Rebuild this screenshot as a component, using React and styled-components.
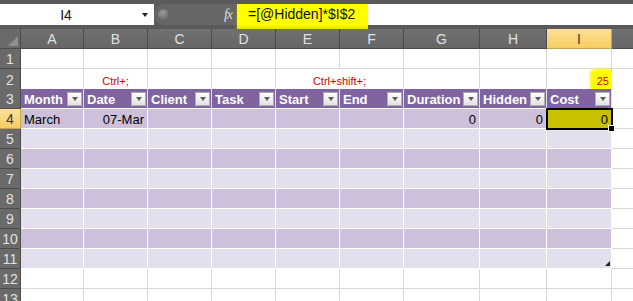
import React from 'react';
import styled, { createGlobalStyle, css } from 'styled-components';

const GlobalStyle = createGlobalStyle`
  html, body {
    margin: 0;
    padding: 0;
    background: #ffffff;
  }
  body {
    font-family: "Liberation Sans", Arial, sans-serif;
  }
`;

const COLUMNS = '21px 63px 64px 64px 64px 64px 64px 76px 67px 65px 64px';

const Window = styled.div`
  width: 633px;
  height: 301px;
  overflow: hidden;
  background: #5a5a5a;
  padding-top: 4px;
  box-sizing: border-box;
  display: flex;
  flex-direction: column;
`;

const FormulaBar = styled.div`
  display: flex;
  height: 25px;
  padding-bottom: 4px;
  box-sizing: border-box;
  flex-shrink: 0;
`;

const NameBox = styled.div`
  width: 154px;
  background: #ffffff;
  display: flex;
  align-items: center;
  font-size: 14px;
  color: #111;
`;

const NameText = styled.span`
  width: 132px;
  text-align: center;
`;

const DropArrow = styled.span`
  margin-left: auto;
  margin-right: 6px;
  width: 0;
  height: 0;
  border-left: 3.5px solid transparent;
  border-right: 3.5px solid transparent;
  border-top: 4px solid #222;
`;

const FxPill = styled.div`
  width: 83px;
  background: #666666;
  border-radius: 11px 0 0 11px;
  display: flex;
  align-items: center;
  padding: 0 5px 0 4px;
  box-sizing: border-box;
`;

const Grip = styled.span`
  width: 11px;
  height: 11px;
  border-radius: 50%;
  background: radial-gradient(circle at 40% 35%, #9a9a9a, #6e6e6e 70%);
  box-shadow: 0 0 1px #4a4a4a;
`;

const FxLabel = styled.span`
  margin-left: auto;
  font-family: "Liberation Serif", "Times New Roman", serif;
  font-style: italic;
  font-size: 14px;
  color: #dcdcdc;
  letter-spacing: -1px;
`;

const FormulaInput = styled.div`
  flex: 1;
  background: #ffffff;
  display: flex;
  align-items: flex-start;
`;

const Marker = styled.span`
  display: inline-flex;
  align-items: flex-start;
  width: 131px;
  height: 25px;
  padding: 2px 0 0 11px;
  box-sizing: border-box;
  background: linear-gradient(#ffff00 80%, #e6e600);
  box-shadow: -1px 2px 3px 0 rgba(150, 150, 0, 0.6);
  font-size: 14px;
  line-height: 17px;
  color: #111;
`;

const Sheet = styled.div`
  display: flex;
  flex-direction: column;
`;

const Row = styled.div`
  display: grid;
  grid-template-columns: ${COLUMNS};
  height: 20px;
`;

const kinds = {
  corner: css`
    background: #6a6a6a;
    border-right: 1px solid #4c4c4c;
    border-bottom: 1px solid #4c4c4c;
    justify-content: flex-end;
    align-items: flex-end;
    padding: 0 2px 2px 0;
  `,
  colhead: css`
    background: linear-gradient(#707070, #666666);
    color: #e2e2e2;
    justify-content: center;
    font-size: 14px;
    border-right: 1px solid #4c4c4c;
    border-bottom: 1px solid #4c4c4c;
  `,
  rowhead: css`
    background: #6a6a6a;
    color: #e2e2e2;
    justify-content: center;
    font-size: 14px;
    padding: 0;
    border-right: 1px solid #4c4c4c;
    border-bottom: 1px solid #4c4c4c;
  `,
  active: css`
    background: linear-gradient(#fbe197, #f6cd62);
    color: #3a3a3a;
    justify-content: center;
    font-size: 14px;
    padding: 0;
    border-right: 1px solid #c9a54a;
    border-bottom: 1px solid #c9a54a;
  `,
  plain: css`
    background: #ffffff;
    border-right: 1px solid #d8d8d8;
    border-bottom: 1px solid #d8d8d8;
  `,
  thead: css`
    background: #8064a2;
    color: #ffffff;
    font-weight: bold;
    padding-right: 1px;
    border-right: 1px solid #e6e0ee;
    border-bottom: 1px solid #ffffff;
  `,
  dark: css`
    background: #ccc0da;
    border-right: 1px solid #ffffff;
    border-bottom: 1px solid #ffffff;
  `,
  light: css`
    background: #e4dfec;
    border-right: 1px solid #ffffff;
    border-bottom: 1px solid #ffffff;
  `,
  current: css`
    background: #c9c100;
    border-right: 1px solid #ffffff;
    border-bottom: 1px solid #ffffff;
    outline: 2px solid #000000;
    outline-offset: -1px;
    z-index: 2;
  `,
};

const Cell = styled.div`
  position: relative;
  display: flex;
  align-items: center;
  padding: 1px 3px 0 3px;
  box-sizing: border-box;
  font-size: 13px;
  color: #000;
  white-space: nowrap;
  justify-content: ${(p) =>
    p.$align === 'right' ? 'flex-end' : p.$align === 'center' ? 'center' : 'flex-start'};
  grid-column: ${(p) => (p.$span ? `span ${p.$span}` : 'auto')};
  ${(p) => kinds[p.$kind]}
`;

const CornerMark = styled.span`
  width: 10px;
  height: 10px;
  background: #8e8e8e;
  clip-path: polygon(100% 0, 100% 100%, 0 100%);
`;

const FilterButton = styled.span`
  margin-left: auto;
  width: 15px;
  height: 14px;
  box-sizing: border-box;
  border: 1px solid #b0b0b0;
  background: linear-gradient(#ffffff, #e2e2e2);
  display: flex;
  align-items: center;
  justify-content: center;

  &::after {
    content: '';
    border-left: 3.5px solid transparent;
    border-right: 3.5px solid transparent;
    border-top: 4px solid #5a5a5a;
  }
`;

const Note = styled.span`
  color: #d40000;
  font-size: 11px;
`;

const NoteMarker = styled.span`
  display: inline-block;
  padding: 3px 4px 3px 6px;
  margin-right: -5px;
  background: #ffff00;
  border-radius: 5px;
  box-shadow: 0 0 3px 1px #f4f400;
`;

const FillHandle = styled.span`
  position: absolute;
  right: -4px;
  bottom: -4px;
  width: 5px;
  height: 5px;
  background: #000;
  border: 1px solid #fff;
`;

const ResizeMark = styled.span`
  position: absolute;
  right: 1px;
  bottom: 2px;
  width: 5px;
  height: 5px;
  background: #222;
  clip-path: polygon(100% 0, 100% 100%, 0 100%);
`;

// J sits mostly past the window edge, so its letter is out of view
const letters = ['A', 'B', 'C', 'D', 'E', 'F', 'G', 'H', 'I', ''];
const headers = ['Month', 'Date', 'Client', 'Task', 'Start', 'End', 'Duration', 'Hidden', 'Cost'];

function RowHead({ n, active }) {
  return <Cell $kind={active ? 'active' : 'rowhead'}>{n}</Cell>;
}

function BlankRow({ n }) {
  return (
    <Row>
      <RowHead n={n} />
      {letters.map((l, i) => (
        <Cell key={i} $kind="plain" />
      ))}
    </Row>
  );
}

function BandRow({ n, tone, last }) {
  return (
    <Row>
      <RowHead n={n} />
      {headers.map((h, i) => (
        <Cell key={h} $kind={tone}>
          {last && i === headers.length - 1 && <ResizeMark />}
        </Cell>
      ))}
      <Cell $kind="plain" />
    </Row>
  );
}

export default function App() {
  return (
    <>
      <GlobalStyle />
      <Window>
        <FormulaBar>
          <NameBox>
            <NameText>I4</NameText>
            <DropArrow />
          </NameBox>
          <FxPill>
            <Grip />
            <FxLabel>fx</FxLabel>
          </FxPill>
          <FormulaInput>
            <Marker>=[@Hidden]*$I$2</Marker>
          </FormulaInput>
        </FormulaBar>

        <Sheet>
          <Row>
            <Cell $kind="corner">
              <CornerMark />
            </Cell>
            {letters.map((l, i) => (
              <Cell key={i} $kind={l === 'I' ? 'active' : 'colhead'}>
                {l}
              </Cell>
            ))}
          </Row>

          <BlankRow n={1} />

          <Row>
            <RowHead n={2} />
            <Cell $kind="plain" />
            <Cell $kind="plain" $align="center">
              <Note>Ctrl+;</Note>
            </Cell>
            <Cell $kind="plain" />
            <Cell $kind="plain" />
            <Cell $kind="plain" $span={2} $align="center">
              <Note>Ctrl+shift+;</Note>
            </Cell>
            <Cell $kind="plain" />
            <Cell $kind="plain" />
            <Cell $kind="plain" $align="right">
              <NoteMarker>
                <Note>25</Note>
              </NoteMarker>
            </Cell>
            <Cell $kind="plain" />
          </Row>

          <Row>
            <RowHead n={3} />
            {headers.map((h) => (
              <Cell key={h} $kind="thead">
                {h}
                <FilterButton />
              </Cell>
            ))}
            <Cell $kind="plain" />
          </Row>

          <Row>
            <RowHead n={4} active />
            <Cell $kind="dark">March</Cell>
            <Cell $kind="dark" $align="right">07-Mar</Cell>
            <Cell $kind="dark" />
            <Cell $kind="dark" />
            <Cell $kind="dark" />
            <Cell $kind="dark" />
            <Cell $kind="dark" $align="right">0</Cell>
            <Cell $kind="dark" $align="right">0</Cell>
            <Cell $kind="current" $align="right">
              0
              <FillHandle />
            </Cell>
            <Cell $kind="plain" />
          </Row>

          <BandRow n={5} tone="light" />
          <BandRow n={6} tone="dark" />
          <BandRow n={7} tone="light" />
          <BandRow n={8} tone="dark" />
          <BandRow n={9} tone="light" />
          <BandRow n={10} tone="dark" />
          <BandRow n={11} tone="light" last />
          <BlankRow n={12} />
          <BlankRow n={13} />
        </Sheet>
      </Window>
    </>
  );
}
